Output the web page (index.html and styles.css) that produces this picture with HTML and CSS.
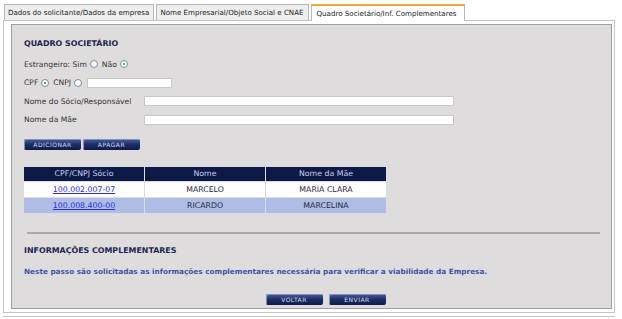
FILE: index.html
```html
<!DOCTYPE html>
<html lang="pt-BR">
<head>
    <meta charset="UTF-8">
    <title>Quadro Societário</title>
    <link rel="stylesheet" href="styles.css">
</head>
<body>
    <div class="tabs">
        <div class="tab">Dados do solicitante/Dados da empresa</div>
        <div class="tab">Nome Empresarial/Objeto Social e CNAE</div>
        <div class="tab active">Quadro Societário/Inf. Complementares</div>
    </div>

    <div class="tab-box">
        <div class="panel">
            <h2 class="section-title">QUADRO SOCIETÁRIO</h2>

            <div class="form-row">
                Estrangeiro: Sim <span class="radio"></span> Não <span class="radio checked"></span>
            </div>

            <div class="form-row">
                CPF <span class="radio checked"></span> CNPJ <span class="radio"></span>
                <span class="field small"></span>
            </div>

            <div class="form-row">
                <span class="label">Nome do Sócio/Responsável</span>
                <span class="field wide"></span>
            </div>

            <div class="form-row">
                <span class="label">Nome da Mãe</span>
                <span class="field wide"></span>
            </div>

            <div class="button-row">
                <span class="btn">ADICIONAR</span>
                <span class="btn">APAGAR</span>
            </div>

            <table class="socios">
                <tr>
                    <th>CPF/CNPJ Sócio</th>
                    <th>Nome</th>
                    <th>Nome da Mãe</th>
                </tr>
                <tr>
                    <td><a href="#">100.002.007-07</a></td>
                    <td>MARCELO</td>
                    <td>MARIA CLARA</td>
                </tr>
                <tr class="alt">
                    <td><a href="#">100.008.400-00</a></td>
                    <td>RICARDO</td>
                    <td>MARCELINA</td>
                </tr>
            </table>

            <div class="divider"></div>

            <h2 class="section-title">INFORMAÇÕES COMPLEMENTARES</h2>
            <p class="info">Neste passo são solicitadas as informações complementares necessária para verificar a viabilidade da Empresa.</p>

            <div class="nav-buttons">
                <span class="btn">VOLTAR</span>
                <span class="btn">ENVIAR</span>
            </div>
        </div>
    </div>
    <div class="next-box"></div>
</body>
</html>
```

FILE: styles.css
```css
body {
    margin: 0;
    padding: 0;
    background-color: #ffffff;
    font-family: "DejaVu Sans", Verdana, sans-serif;
    font-size: 7.6px;
    color: #222222;
}

.tabs {
    display: flex;
    padding: 3px 0 0 4px;
}

.tab {
    background-color: #eeeeee;
    border: 1px solid #b8b8b8;
    border-bottom: none;
    padding: 3px 4px 3px 3px;
    margin-right: 2px;
    font-size: 7.1px;
    color: #222222;
    margin-top: 1px;
}

.tab.active {
    background-color: #ffffff;
    border-top: 2px solid #f0a93a;
    margin-top: 0;
    padding: 3px 8px 3px 5px;
    position: relative;
    top: 1px;
}

.tab-box {
    margin: 0 7px 0 3px;
    border: 1px solid #c4c4c4;
    padding: 3px 2px 3px 7px;
    background-color: #ffffff;
}

.panel {
    background-color: #dedcdd;
    border: 1px solid #9e9e9e;
    padding: 14px 12px 1px 12px;
}

.section-title {
    font-size: 7.9px;
    font-weight: bold;
    color: #1b2450;
    margin: 0 0 11px 0;
}

.form-row {
    display: flex;
    align-items: center;
    gap: 3px;
    height: 10px;
    margin-bottom: 8.5px;
    color: #333333;
}

.label {
    width: 117px;
}

.radio {
    display: inline-block;
    width: 8px;
    height: 8px;
    border: 1px solid #7a8aa0;
    border-radius: 50%;
    background-color: #ffffff;
    box-sizing: border-box;
    position: relative;
    margin-right: 1px;
}

.radio.checked::after {
    content: "";
    position: absolute;
    left: 2px;
    top: 2px;
    width: 2px;
    height: 2px;
    border-radius: 50%;
    background-color: #2a9a2a;
}

.field {
    display: inline-block;
    height: 10px;
    background-color: #ffffff;
    border: 1px solid #c8c8c8;
    box-sizing: border-box;
}

.field.small {
    width: 85px;
    margin-left: 1px;
}

.field.wide {
    width: 310px;
}

.button-row {
    display: flex;
    gap: 2px;
    margin-top: 14px;
}

.btn {
    display: inline-block;
    width: 57px;
    height: 11px;
    line-height: 11px;
    text-align: center;
    font-size: 6px;
    letter-spacing: 0.5px;
    color: #d8dff0;
    background: linear-gradient(to bottom, #4a5f96 0%, #1d2e66 50%, #0f1c4a 100%);
    border-radius: 2px;
    box-shadow: inset 1px 1px 0 #7f90bf;
}

.socios {
    border-collapse: separate;
    border-spacing: 1px;
    table-layout: fixed;
    width: 364px;
    margin: 16px 0 0 0;
    font-size: 7.8px;
    text-align: center;
    position: relative;
    left: -1px;
}

.socios th {
    background-color: #0d1a48;
    color: #c8d0e6;
    font-weight: normal;
    height: 14px;
    padding: 0;
}

.socios td {
    background-color: #ffffff;
    color: #2a2a40;
    height: 15px;
    padding: 0;
}

.socios tr.alt td {
    background-color: #aebce6;
}

.socios a {
    color: #2a2ee0;
}

.divider {
    height: 2px;
    background-color: #a9a9a9;
    margin: 18px -1px 0 3px;
}

.divider + .section-title {
    margin-top: 12px;
    margin-bottom: 12px;
}

.info {
    margin: 0;
    font-weight: bold;
    color: #3f53a6;
    font-size: 7.3px;
}

.nav-buttons {
    display: flex;
    justify-content: center;
    gap: 6px;
    margin: 18px 0 0 0;
    padding-left: 28px;
    height: 13px;
}

.next-box {
    margin: 3px 7px 0 3px;
    border-top: 1px solid #c4c4c4;
    height: 5px;
}
```
